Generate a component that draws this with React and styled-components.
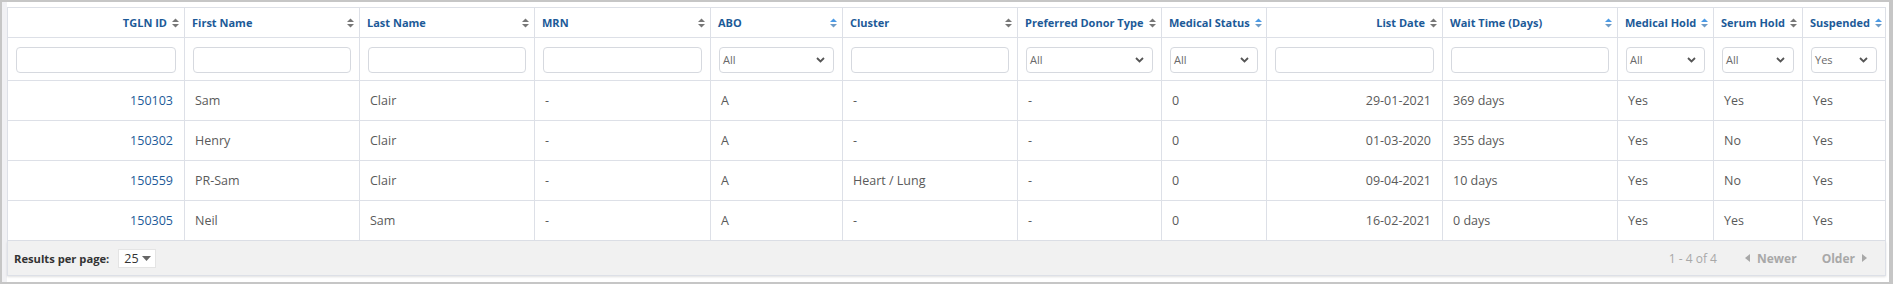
import React from 'react'
import styled, { createGlobalStyle } from 'styled-components'

const GlobalStyle = createGlobalStyle`
  html, body {
    margin: 0;
    padding: 0;
    background: #c6c6c6;
    font-family: "Open Sans", "Liberation Sans", sans-serif;
  }
  * { box-sizing: border-box; }
`

const theme = {
  line  : '#dde0e7',
  blue  : '#1c5a98',
  text  : '#5a5a5a',
  footer: '#f1f1f1'
}

const columns = [
  { key: 'id', label: 'TGLN ID', width: 177, align: 'right', filter: 'input' },
  { key: 'first', label: 'First Name', width: 175, filter: 'input' },
  { key: 'last', label: 'Last Name', width: 175, filter: 'input' },
  { key: 'mrn', label: 'MRN', width: 176, filter: 'input' },
  { key: 'abo', label: 'ABO', width: 132, filter: 'select', active: true },
  { key: 'cluster', label: 'Cluster', width: 175, filter: 'input' },
  { key: 'donor', label: 'Preferred Donor Type', width: 144, filter: 'select' },
  { key: 'status', label: 'Medical Status', width: 105, filter: 'select', active: true },
  { key: 'date', label: 'List Date', width: 176, align: 'right', filter: 'input' },
  { key: 'wait', label: 'Wait Time (Days)', width: 175, filter: 'input', active: true },
  { key: 'mhold', label: 'Medical Hold', width: 96, filter: 'select', active: true },
  { key: 'shold', label: 'Serum Hold', width: 89, filter: 'select' },
  { key: 'susp', label: 'Suspended', width: 83, filter: 'select', active: true, value: 'Yes' }
]

const rows = [
  ['150103', 'Sam', 'Clair', '-', 'A', '-', '-', '0', '29-01-2021', '369 days', 'Yes', 'Yes', 'Yes'],
  ['150302', 'Henry', 'Clair', '-', 'A', '-', '-', '0', '01-03-2020', '355 days', 'Yes', 'No', 'Yes'],
  ['150559', 'PR-Sam', 'Clair', '-', 'A', 'Heart / Lung', '-', '0', '09-04-2021', '10 days', 'Yes', 'No', 'Yes'],
  ['150305', 'Neil', 'Sam', '-', 'A', '-', '-', '0', '16-02-2021', '0 days', 'Yes', 'Yes', 'Yes']
]

const Frame = styled.div`
    padding: 2px 4px 3px 2px;
  `,
  Panel = styled.div`
    background: #fff;
    border-left: 5px solid #f1f1f4;
    padding: 5px 3px 6px 0;
  `,
  Table = styled.table`
    width: 1879px;
    table-layout: fixed;
    border-collapse: collapse;
    border: 1px solid ${theme.line};
  `,
  Col = styled.col`
    width: ${props => props.$w}px;
  `,
  HeadCell = styled.th`
    height: 30px;
    padding: 0 5px 0 7px;
    border: 1px solid ${theme.line};
    font-size: 11px;
    font-weight: 700;
    color: ${theme.blue};
    white-space: nowrap;
    vertical-align: middle;
  `,
  HeadInner = styled.div`
    display: flex;
    align-items: center;
    justify-content: ${props => props.$right ? 'flex-end' : 'space-between'};
    gap: 5px;
  `,
  SortSvg = styled.svg`
    flex: none;
  `,
  FilterCell = styled.td`
    height: 43px;
    padding: 1px 8px 0 8px;
    border: 1px solid ${theme.line};
    vertical-align: middle;
  `,
  TextInput = styled.input`
    display: block;
    width: 100%;
    height: 26px;
    border: 1px solid #d6d9df;
    border-radius: 4px;
    background: #fff;
    outline: none;
  `,
  SelectBox = styled.div`
    display: flex;
    align-items: center;
    justify-content: space-between;
    height: 26px;
    padding: 0 8px 0 3px;
    border: 1px solid #d6d9df;
    border-radius: 4px;
    font-size: 11px;
    color: #6a6a6a;
  `,
  Cell = styled.td`
    height: 40px;
    padding: 0 ${props => props.$right ? '11px' : '10px'} 0 10px;
    border: 1px solid ${theme.line};
    text-align: ${props => props.$right ? 'right' : 'left'};
    font-size: 12.5px;
    color: ${props => props.$link ? theme.blue : theme.text};
    white-space: nowrap;
  `,
  Footer = styled.div`
    width: 1879px;
    height: 35px;
    display: flex;
    align-items: center;
    justify-content: space-between;
    padding: 0 18px 0 6px;
    background: ${theme.footer};
    border: 1px solid ${theme.line};
    border-top: none;
    box-shadow: 0 1px 2px rgba(0, 0, 0, 0.12);
    font-size: 12px;
  `,
  PerPage = styled.div`
    display: flex;
    align-items: center;
    gap: 9px;
    font-size: 11.2px;
    font-weight: 700;
    color: #333;
  `,
  PageSize = styled.div`
    display: flex;
    align-items: center;
    justify-content: space-between;
    width: 38px;
    height: 19px;
    padding: 0 4px 0 5px;
    background: #fff;
    border: 1px solid #e4e4e4;
    font-weight: 400;
    font-size: 12.5px;
    color: #333;
  `,
  Pager = styled.div`
    display: flex;
    align-items: center;
    color: #a8a8a8;
  `,
  Count = styled.span`
    margin-right: 28px;
  `,
  PageLink = styled.span`
    display: flex;
    align-items: center;
    gap: 7px;
    font-weight: 700;
    margin-left: ${props => props.$gap || 0}px;
  `

const SortIcon = ({ active }) => (
  <SortSvg width="7" height="10" viewBox="0 0 7 10">
    <path d="M0 4 L3.5 0.5 L7 4 Z" fill={active ? '#4a9ae6' : '#777'} />
    <path d="M0 6 L7 6 L3.5 9.5 Z" fill={active ? '#6f9bc6' : '#777'} />
  </SortSvg>
)

const Chevron = () => (
  <svg width="9" height="6" viewBox="0 0 9 6">
    <path d="M1 1 L4.5 4.5 L8 1" fill="none" stroke="#555" strokeWidth="1.8" />
  </svg>
)

const Caret = ({ dir, color }) => (
  <svg width="5" height="8" viewBox="0 0 5 8">
    {dir === 'left'
      ? <path d="M5 0 L0 4 L5 8 Z" fill={color} />
      : <path d="M0 0 L5 4 L0 8 Z" fill={color} />}
  </svg>
)

const Header = ({ col }) => (
  <HeadCell>
    <HeadInner $right={col.align === 'right'}>
      <span>{col.label}</span>
      <SortIcon active={col.active} />
    </HeadInner>
  </HeadCell>
)

const Filter = ({ col }) => (
  <FilterCell>
    {col.filter === 'select'
      ? <SelectBox><span>{col.value || 'All'}</span><Chevron /></SelectBox>
      : <TextInput type="text" />}
  </FilterCell>
)

export default function App () {
  return (
    <>
      <GlobalStyle />
      <Frame>
        <Panel>
          <Table>
            <colgroup>
              {columns.map(c => <Col key={c.key} $w={c.width} />)}
            </colgroup>
            <thead>
              <tr>{columns.map(c => <Header key={c.key} col={c} />)}</tr>
              <tr>{columns.map(c => <Filter key={c.key} col={c} />)}</tr>
            </thead>
            <tbody>
              {rows.map(r => (
                <tr key={r[0]}>
                  {r.map((v, i) => (
                    <Cell key={i} $right={columns[i].align === 'right'} $link={i === 0}>{v}</Cell>
                  ))}
                </tr>
              ))}
            </tbody>
          </Table>
          <Footer>
            <PerPage>
              Results per page:
              <PageSize>
                <span>25</span>
                <svg width="9" height="5" viewBox="0 0 9 5"><path d="M0 0 L9 0 L4.5 5 Z" fill="#666" /></svg>
              </PageSize>
            </PerPage>
            <Pager>
              <Count>1 - 4 of 4</Count>
              <PageLink><Caret dir="left" color="#a8a8a8" />Newer</PageLink>
              <PageLink $gap={25}>Older<Caret dir="right" color="#a8a8a8" /></PageLink>
            </Pager>
          </Footer>
        </Panel>
      </Frame>
    </>
  )
}
